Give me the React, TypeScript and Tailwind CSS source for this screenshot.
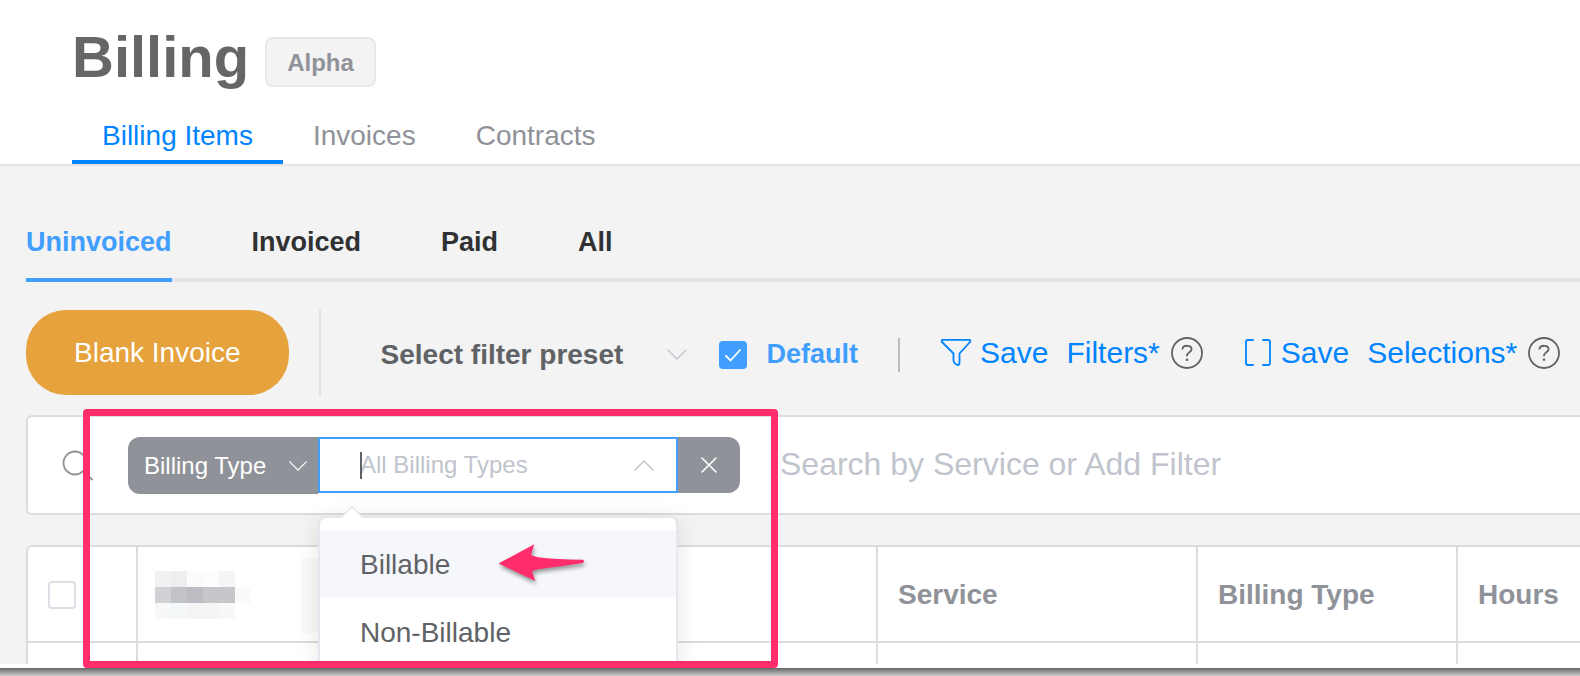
import type { ReactNode } from "react";

const mainTabs = ["Billing Items", "Invoices", "Contracts"];
const statusTabs = ["Uninvoiced", "Invoiced", "Paid", "All"];
const menuItems = ["Billable", "Non-Billable"];

// shades of the redacted column title, one entry per block
const redacted = [
  ["bg-[#f1f1f2]", "bg-[#eeeeef]", "bg-[#fafbfb]", "bg-[#fdfdfd]", "bg-[#f5f5f6]", "bg-white"],
  ["bg-[#d0d1d4]", "bg-[#c2c3c7]", "bg-[#bcbdc2]", "bg-[#c6c7ca]", "bg-[#c6c7ca]", "bg-[#fafafa]"],
  ["bg-[#f8f8f8]", "bg-[#f5f8f8]", "bg-[#f5f5f5]", "bg-[#f5f5f5]", "bg-[#f8f8f8]", "bg-white"],
];

function Chevron({ up = false, className }: { up?: boolean; className: string }) {
  return (
    <svg viewBox="0 0 22 12" className={className} fill="none" stroke="currentColor" strokeWidth="1.5" strokeLinecap="round" strokeLinejoin="round" aria-hidden="true">
      <path d={up ? "M1 11L11 1L21 11" : "M1 1L11 11L21 1"} />
    </svg>
  );
}

function HelpButton({ label }: { label: string }) {
  return (
    <button type="button" aria-label={label} className="ml-[11px] size-8 shrink-0 text-[#606266]">
      <svg viewBox="0 0 32 32" className="size-8" fill="none" stroke="currentColor" strokeWidth="1.8" strokeLinecap="round" aria-hidden="true">
        <circle cx="16" cy="16" r="15" />
        <path d="M11.500 11.800C12 7.800 20.600 7.600 20.600 12.200C20.600 15.200 16 15.200 16 18.500" />
        <circle cx="16" cy="22.800" r="1.300" fill="currentColor" stroke="none" />
      </svg>
    </button>
  );
}

function SaveLink({ label, children }: { label: string; children: ReactNode }) {
  return (
    <button type="button" className="flex shrink-0 items-center gap-2 text-[30px] leading-9 text-[#0084ff]">
      {children}
      <span className="whitespace-nowrap">
        Save<span className="ml-[18px]">{label}</span>
      </span>
    </button>
  );
}

function FilterMenu() {
  return (
    <div className="absolute top-full left-0 z-10 mt-[23px] h-[153px] w-full rounded-t-lg border-2 border-[#e4e7ed] bg-white pt-3 shadow-[0_4px_24px_rgba(0,0,0,0.1)]">
      <svg viewBox="0 0 24 14" className="absolute -top-3 left-5 h-[14px] w-6" aria-hidden="true">
        <path d="M1 12L12 1L23 12" fill="#fff" stroke="#e4e7ed" strokeWidth="1.5" />
        <path d="M2 14V12L12 2L22 12V14Z" fill="#fff" />
      </svg>
      <ul>
        {menuItems.map((item, index) => (
          <li key={item} className={index === 0 ? "relative bg-[#f5f7fa]" : ""}>
            <button type="button" className="h-[68px] w-full px-10 pt-[2px] text-left text-[28px] text-[#606266]">
              {item}
            </button>
            {index === 0 && (
              <svg viewBox="0 0 90 42" className="absolute top-3 left-[177px] h-[42px] w-[90px] drop-shadow-[1px_3px_2px_rgba(0,0,0,0.4)]" aria-hidden="true">
                <path d="M1.500 21.500L37.300 2.300L34 12.800Q37 15 45 15.800Q58 17.300 86 17.800Q88 19.300 86 21C70 23.500 52 25.500 40 27.500Q36.500 28.500 35 29.500L38.300 39Z" fill="#ff2d6c" />
              </svg>
            )}
          </li>
        ))}
      </ul>
    </div>
  );
}

function FilterBar() {
  return (
    <div className="-mr-px flex h-[100px] items-start rounded-l-md border-2 border-r-0 border-[#dcdcdc] bg-white pt-5 pl-[34px]">
      <svg viewBox="0 0 34 34" className="mt-3 size-[34px] shrink-0 text-[#909299]" fill="none" stroke="currentColor" strokeWidth="1.8" aria-hidden="true">
        <circle cx="13" cy="14" r="11.5" />
        <path d="M21.500 22.500L30.500 31" />
      </svg>
      <div className="relative ml-8 shrink-0">
        <select aria-label="Filter field" defaultValue="Billing Type" className="h-[57px] w-[190px] appearance-none rounded-l-xl bg-[#909299] pl-4 text-[24px] text-white">
          <option>Billing Type</option>
        </select>
        <Chevron className="pointer-events-none absolute top-6 right-[11px] h-[10px] w-[18px] text-white" />
      </div>
      <div className="relative w-[360px] shrink-0">
        <input
          type="text"
          aria-label="Billing types"
          placeholder="All Billing Types"
          className="block h-14 w-full border-2 border-[#409eff] bg-white pl-10 text-[24px] text-[#606266] outline-none placeholder:text-[#c0c4cc] placeholder:opacity-100"
        />
        <span className="absolute top-[15px] left-[42px] h-[27px] w-[2px] bg-[#606266]" />
        <Chevron up className="absolute top-[23px] right-6 h-[11px] w-5 text-[#c0c4cc]" />
        <FilterMenu />
      </div>
      <button type="button" aria-label="Remove filter" className="flex h-14 w-[62px] shrink-0 items-center justify-center rounded-r-xl bg-[#909299] text-white">
        <svg viewBox="0 0 16 16" className="size-4" stroke="currentColor" strokeWidth="1.6" strokeLinecap="round" aria-hidden="true">
          <path d="M1 1L15 15M15 1L1 15" />
        </svg>
      </button>
      <input
        type="search"
        aria-label="Search"
        placeholder="Search by Service or Add Filter"
        className="ml-10 h-[54px] min-w-0 flex-1 bg-transparent text-[32px] text-[#606266] outline-none placeholder:text-[#c0c4cc] placeholder:opacity-100"
      />
    </div>
  );
}

function ItemsTable() {
  const cell = "border-2 border-[#dcdcdc]";
  const titleCell = "border-2 border-t-0 border-[#dcdcdc] p-0 pt-[2px] pl-5";
  return (
    <div className="mt-[30px] -mr-px overflow-hidden rounded-tl-md border-t-2 border-l-2 border-[#dcdcdc] bg-white">
      <table className="w-full table-fixed border-collapse text-left text-[28px] text-[#909299]">
        <colgroup>
          <col className="w-[109px]" />
          <col className="w-[740px]" />
          <col className="w-[320px]" />
          <col className="w-[260px]" />
          <col />
        </colgroup>
        <thead>
          <tr className="h-[95px]">
            <th className={`${titleCell} border-l-0`}>
              <input type="checkbox" aria-label="Select all" className="block size-7 appearance-none rounded border-2 border-[#dcdfe6] bg-white" />
            </th>
            <th aria-label="Client" className={`${cell} border-t-0 p-0 pt-[2px] pl-[17px]`}>
              <div className="flex w-[166px] items-center justify-between">
                <div className="w-24">
                  {redacted.map((row, index) => (
                    <div key={index} className="flex h-4">
                      {row.map((shade, block) => (
                        <span key={block} className={`w-4 ${shade}`} />
                      ))}
                    </div>
                  ))}
                </div>
                <span className="h-[75px] w-5 bg-[#f9f9f9]" />
              </div>
            </th>
            <th className={titleCell}>Service</th>
            <th className={titleCell}>Billing Type</th>
            <th className={`${titleCell} border-r-0`}>Hours</th>
          </tr>
        </thead>
        <tbody>
          <tr className="h-[22px]">
            <td className={`${cell} border-b-0 border-l-0 p-0`} />
            <td className={`${cell} border-b-0 p-0`} />
            <td className={`${cell} border-b-0 p-0`} />
            <td className={`${cell} border-b-0 p-0`} />
            <td className={`${cell} border-r-0 border-b-0 p-0`} />
          </tr>
        </tbody>
      </table>
    </div>
  );
}

export default function App() {
  return (
    <div className="relative overflow-hidden bg-white font-['Liberation_Sans',Arial,sans-serif]">
      <header className="border-b-2 border-[#e4e4e4] bg-white pl-[72px]">
        <div className="flex h-[108px] items-start pt-[23px]">
          <h1 className="text-[58px] leading-[68px] font-bold text-[#666666]">Billing</h1>
          <span className="mt-[14px] ml-4 h-[50px] rounded-lg border-2 border-[#e8e8e8] bg-[#f3f3f3] px-5 text-[24px] leading-[48px] font-bold text-[#909299]">Alpha</span>
        </div>
        <nav className="flex">
          {mainTabs.map((tab, index) => (
            <a
              key={tab}
              href="#"
              className={`h-14 border-b-4 px-[30px] text-[28px] leading-[56px] ${index === 0 ? "border-[#0084ff] text-[#0084ff]" : "border-transparent text-[#909299]"}`}
            >
              {tab}
            </a>
          ))}
        </nav>
      </header>

      <main className="overflow-hidden bg-[#f3f3f3] pt-9 pl-[26px]">
        <nav className="flex gap-20 border-b-4 border-[#e4e4eb]">
          {statusTabs.map((tab, index) => (
            <a
              key={tab}
              href="#"
              className={`-mb-1 h-20 border-b-4 text-[27px] leading-[80px] font-bold ${index === 0 ? "border-[#409eff] text-[#409eff]" : "border-transparent text-[#303133]"}`}
            >
              {tab}
            </a>
          ))}
        </nav>

        <div className="mt-7 mb-5 flex h-[85px] items-center">
          <button type="button" className="h-full shrink-0 rounded-[40px] bg-[#e6a23c] px-12 text-[28px] text-white">
            Blank Invoice
          </button>
          <div className="ml-[30px] h-full w-[2px] shrink-0 bg-[#dcdfe6]" />
          <div className="mt-1 ml-[60px] flex shrink-0 items-center">
            <div className="relative">
              <select aria-label="Filter preset" defaultValue="Select filter preset" className="block w-[306px] appearance-none text-[28px] font-bold text-[#606266]">
                <option>Select filter preset</option>
              </select>
              <Chevron className="pointer-events-none absolute top-[15px] right-0 h-[11px] w-5 text-[#c0c4cc]" />
            </div>
            <label className="ml-8 flex items-center text-[27px] font-bold text-[#409eff]">
              <span className="relative mr-5 size-7">
                <input type="checkbox" defaultChecked className="block size-7 appearance-none rounded bg-[#409eff]" />
                <svg viewBox="0 0 28 28" className="pointer-events-none absolute inset-0 size-7" fill="none" stroke="#fff" strokeWidth="1.8" aria-hidden="true">
                  <path d="M6.500 14.500L11.500 19.500L21.500 8.500" />
                </svg>
              </span>
              Default
            </label>
            <div className="ml-10 h-[34px] w-[2px] bg-[#bbbbbb]" />
          </div>
          <div className="ml-10 flex items-center">
            <SaveLink label="Filters*">
              <svg viewBox="0 0 32 30" className="h-[30px] w-8" fill="none" stroke="currentColor" strokeWidth="1.8" strokeLinejoin="round" aria-hidden="true">
                <path d="M2.500 1.800H29.500Q31 2.300 30 4L19.500 15.500V24.500Q19.500 27 18 27Q13.500 26 13.500 22V15.500L2 4Q1 2.300 2.500 1.800Z" />
              </svg>
            </SaveLink>
            <HelpButton label="About saving filters" />
          </div>
          <div className="ml-10 flex items-center">
            <SaveLink label="Selections*">
              <svg viewBox="0 0 30 30" className="h-[30px] w-[30px]" fill="none" stroke="currentColor" strokeWidth="1.8" strokeLinecap="round" strokeLinejoin="round" aria-hidden="true">
                <path d="M10 2H5Q3 2 3 4V25Q3 27 5 27H10M20 2H25Q27 2 27 4V25Q27 27 25 27H20" />
              </svg>
            </SaveLink>
            <HelpButton label="About saving selections" />
          </div>
        </div>

        <FilterBar />
        <ItemsTable />
      </main>

      <div className="h-1 bg-white" />
      <div className="h-2 bg-linear-to-b from-[#666666] to-[#cfcfcf]" />
      <div className="pointer-events-none absolute top-[409px] bottom-2 left-[83px] z-20 w-[695px] rounded border-7 border-[#ff2d6c]" />
    </div>
  );
}
